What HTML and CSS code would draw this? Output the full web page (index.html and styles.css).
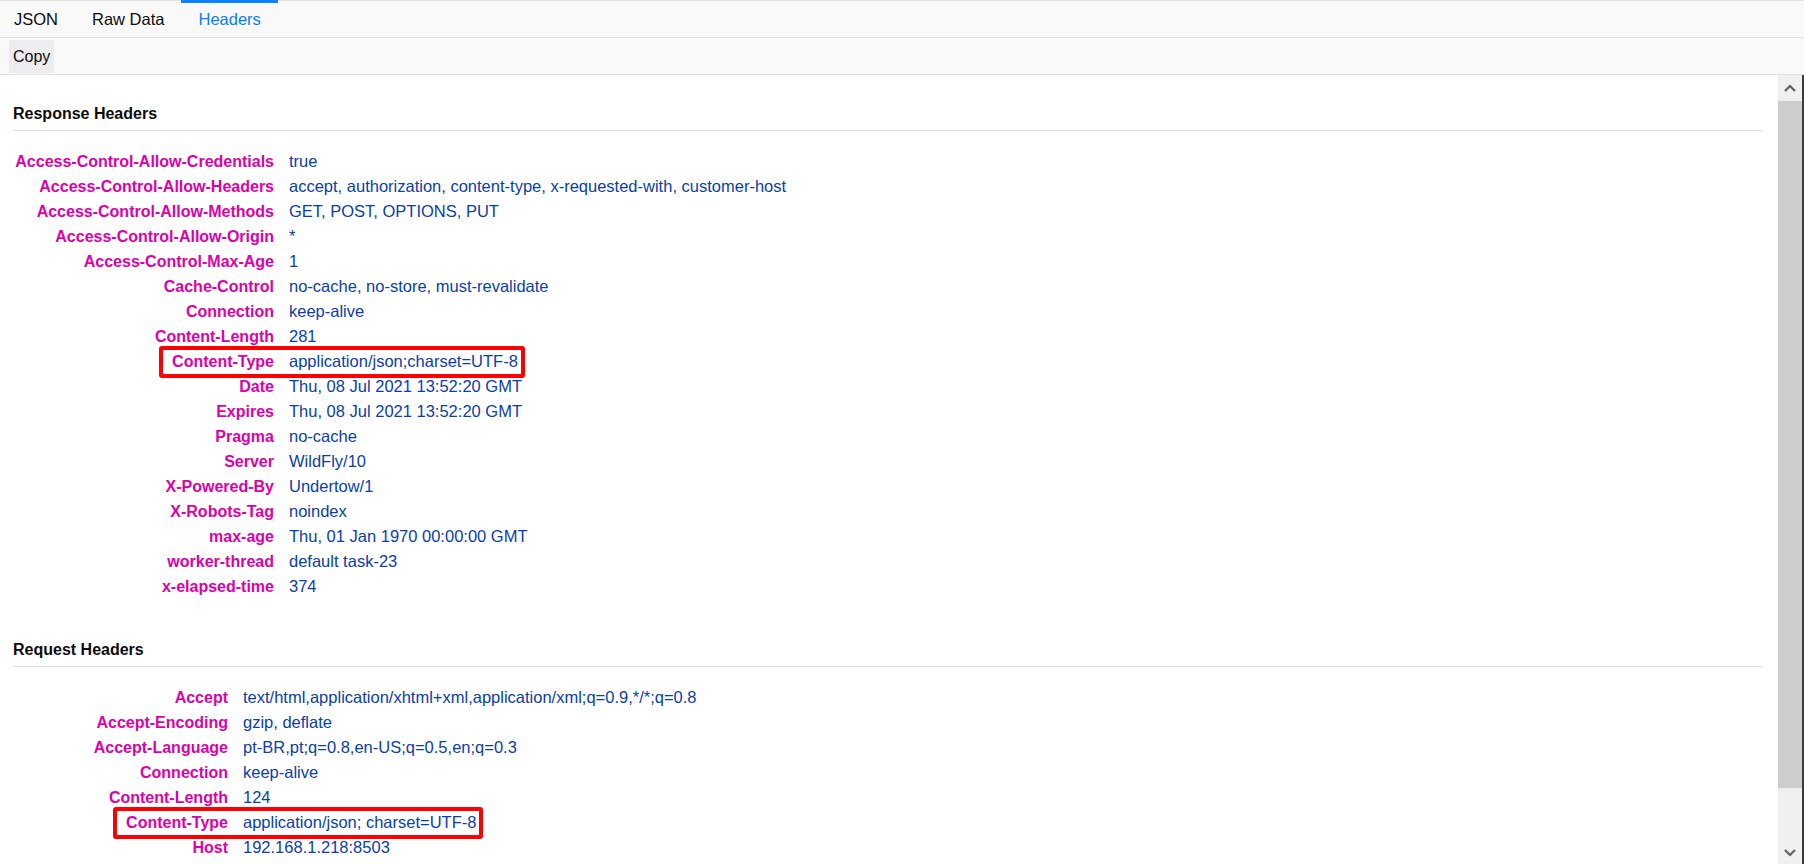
FILE: index.html
```html
<!DOCTYPE html>
<html lang="en">
<head>
    <meta charset="UTF-8">
    <meta name="viewport" content="width=device-width, initial-scale=1.0">
    <title>Headers</title>
    <link rel="stylesheet" href="styles.css">
</head>
<body>
    <div class="tabs">
        <span class="tab">JSON</span>
        <span class="tab">Raw Data</span>
        <span class="tab active">Headers</span>
    </div>
    <div class="toolbar">
        <button class="btn">Copy</button>
    </div>

    <div class="main">
        <div class="panel">
            <div class="section response">
                <h3 class="section-title">Response Headers</h3>
                <table class="headers">
                    <tr><td class="name">Access-Control-Allow-Credentials</td><td class="value">true</td></tr>
                    <tr><td class="name">Access-Control-Allow-Headers</td><td class="value">accept, authorization, content-type, x-requested-with, customer-host</td></tr>
                    <tr><td class="name">Access-Control-Allow-Methods</td><td class="value">GET, POST, OPTIONS, PUT</td></tr>
                    <tr><td class="name">Access-Control-Allow-Origin</td><td class="value">*</td></tr>
                    <tr><td class="name">Access-Control-Max-Age</td><td class="value">1</td></tr>
                    <tr><td class="name">Cache-Control</td><td class="value">no-cache, no-store, must-revalidate</td></tr>
                    <tr><td class="name">Connection</td><td class="value">keep-alive</td></tr>
                    <tr><td class="name">Content-Length</td><td class="value">281</td></tr>
                    <tr><td class="name"><span class="mark"></span>Content-Type</td><td class="value">application/json;charset=UTF-8</td></tr>
                    <tr><td class="name">Date</td><td class="value">Thu, 08 Jul 2021 13:52:20 GMT</td></tr>
                    <tr><td class="name">Expires</td><td class="value">Thu, 08 Jul 2021 13:52:20 GMT</td></tr>
                    <tr><td class="name">Pragma</td><td class="value">no-cache</td></tr>
                    <tr><td class="name">Server</td><td class="value">WildFly/10</td></tr>
                    <tr><td class="name">X-Powered-By</td><td class="value">Undertow/1</td></tr>
                    <tr><td class="name">X-Robots-Tag</td><td class="value">noindex</td></tr>
                    <tr><td class="name">max-age</td><td class="value">Thu, 01 Jan 1970 00:00:00 GMT</td></tr>
                    <tr><td class="name">worker-thread</td><td class="value">default task-23</td></tr>
                    <tr><td class="name">x-elapsed-time</td><td class="value">374</td></tr>
                </table>
            </div>

            <div class="section request">
                <h3 class="section-title">Request Headers</h3>
                <table class="headers">
                    <tr><td class="name">Accept</td><td class="value">text/html,application/xhtml+xml,application/xml;q=0.9,*/*;q=0.8</td></tr>
                    <tr><td class="name">Accept-Encoding</td><td class="value">gzip, deflate</td></tr>
                    <tr><td class="name">Accept-Language</td><td class="value">pt-BR,pt;q=0.8,en-US;q=0.5,en;q=0.3</td></tr>
                    <tr><td class="name">Connection</td><td class="value">keep-alive</td></tr>
                    <tr><td class="name">Content-Length</td><td class="value">124</td></tr>
                    <tr><td class="name"><span class="mark"></span>Content-Type</td><td class="value">application/json; charset=UTF-8</td></tr>
                    <tr><td class="name">Host</td><td class="value">192.168.1.218:8503</td></tr>
                </table>
            </div>
        </div>

        <div class="scrollbar">
            <div class="sb-btn">
                <svg width="12" height="8" viewBox="0 0 12 8"><polyline points="1,7 6,2 11,7" fill="none" stroke="#606060" stroke-width="2.2"/></svg>
            </div>
            <div class="sb-thumb"></div>
            <div class="sb-track"></div>
            <div class="sb-btn down">
                <svg width="12" height="8" viewBox="0 0 12 8"><polyline points="1,1 6,6 11,1" fill="none" stroke="#606060" stroke-width="2.2"/></svg>
            </div>
        </div>
        <div class="edge"></div>
    </div>
</body>
</html>
```

FILE: styles.css
```css
* {
    margin: 0;
    padding: 0;
    box-sizing: border-box;
    font-family: 'Liberation Sans', Arial, sans-serif;
}

body {
    background: #fff;
    color: #0c0c0d;
    font-size: 16px;
    height: 864px;
    overflow: hidden;
}

/* tab strip */
.tabs {
    display: flex;
    height: 38px;
    background: #f9f9fa;
    border-top: 1px solid #e1e1e2;
    border-bottom: 1px solid #e1e1e2;
}

.tab {
    padding: 0 17px;
    font-size: 16.5px;
    line-height: 36px;
    color: #0c0c0d;
}

.tab:first-child {
    padding-left: 14px;
}

.tab.active {
    color: #0a7ff0;
    margin-top: -1px;
    height: 37px;
    line-height: 38px;
    box-shadow: inset 0 3px 0 #0a84ff;
}

/* toolbar */
.toolbar {
    height: 37px;
    padding: 2px 9px 0;
    background: #f9f9fa;
    border-bottom: 1px solid #e1e1e2;
}

.btn {
    height: 33px;
    padding: 0 4px;
    background: #ededf0;
    border: none;
    border-radius: 2px;
    font-size: 16px;
    line-height: 33px;
    color: #0c0c0d;
}

/* headers panel */
.main {
    display: flex;
    height: 789px;
}

.panel {
    flex: 1;
    overflow: hidden;
    padding: 29px 16px 0 13px;
}

.section {
    margin-bottom: 41px;
}

.section-title {
    font-size: 16px;
    font-weight: bold;
    line-height: 20px;
    padding-bottom: 6px;
    border-bottom: 1px solid #e1e1e2;
    color: #0c0c0d;
}

.headers {
    border-collapse: collapse;
    margin-top: 18px;
}

.headers td {
    line-height: 25px;
    white-space: nowrap;
    vertical-align: top;
}

.headers .name {
    position: relative;
    text-align: right;
    font-weight: bold;
    color: #dd00a9;
}

.headers .value {
    padding-left: 15px;
    font-size: 16.5px;
    color: #0b3ea8;
}

.response .name {
    width: 261px;
}

.request .name {
    width: 215px;
}

/* red annotation boxes */
.mark {
    position: absolute;
    top: -3px;
    height: 32px;
    border: 4px solid #ff0000;
    border-radius: 3px;
}

.response .mark {
    left: 146px;
    width: 366px;
}

.request .mark {
    left: 100px;
    width: 370px;
}

/* fake scrollbar */
.scrollbar {
    width: 24px;
    display: flex;
    flex-direction: column;
    background: #f0f0f0;
}

.sb-btn {
    height: 26px;
    display: flex;
    align-items: center;
    justify-content: center;
}

.sb-btn.down {
    padding-top: 4px;
}

.sb-thumb {
    height: 687px;
    background: #cdcdcd;
}

.sb-track {
    flex: 1;
}

.edge {
    width: 2px;
    background: #3c3c3c;
}
```
